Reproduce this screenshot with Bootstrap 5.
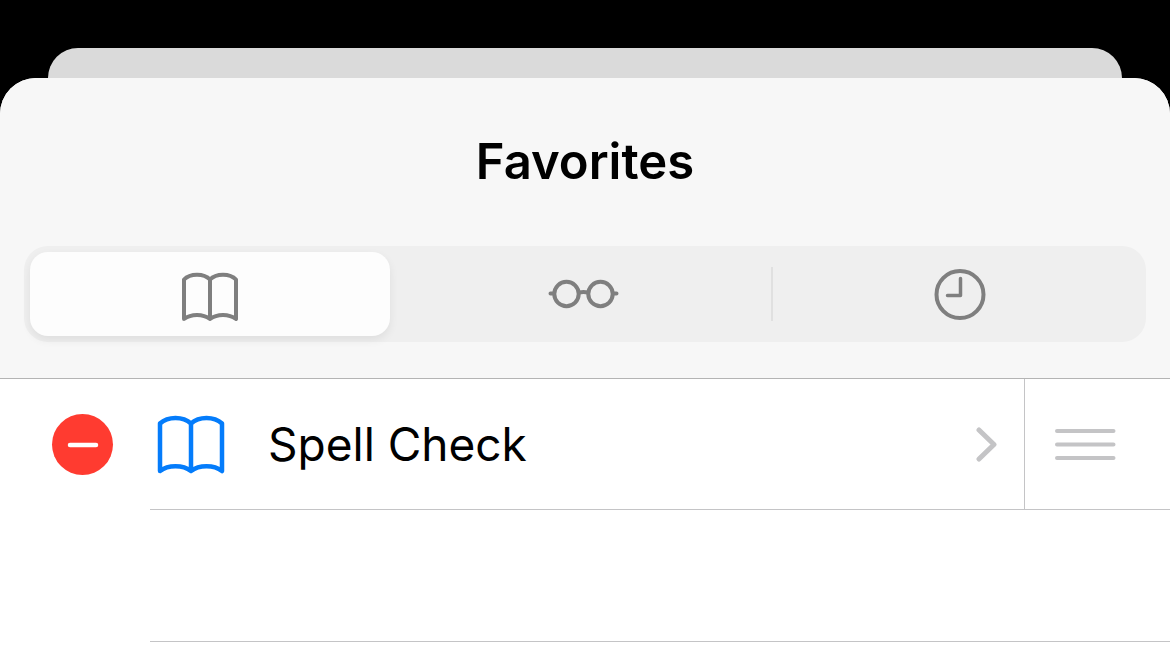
<!DOCTYPE html>
<html lang="en">
<head>
<meta charset="utf-8">
<meta name="viewport" content="width=device-width, initial-scale=1">
<title>Favorites</title>
<link href="https://cdn.jsdelivr.net/npm/bootstrap@5.3.0/dist/css/bootstrap.min.css" rel="stylesheet">
<style>
  body { background: #000; color: #000; font-family: Inter, "Liberation Sans", sans-serif; }
  svg { display: block; fill: none; stroke: currentColor; stroke-linecap: round; stroke-linejoin: round; }
  .sheet-behind { height: 30px; margin: 48px 48px 0; background: #dadada; border-radius: 32px 32px 0 0; }
  .sheet { background: #fff; border-radius: 36px 36px 0 0; }
  .sheet-header { background: #f7f7f7; border-bottom: 1px solid #b4b4b4; padding: 54px 24px 36px; }
  .sheet-title { font-size: 49px; line-height: 60px; font-weight: 600; margin-bottom: 54px; }
  .segments { height: 96px; background: #efefef; border-radius: 24px; color: #7f7f7f; }
  .segment { flex: 1 1 0; margin: 6px 8px 6px 6px; border-radius: 18px; }
  .segment-divider + .segment { margin: 6px 6px 6px 8px; }
  .segment.active { background: #fdfdfd; box-shadow: 0 4px 10px rgba(0, 0, 0, .07); }
  .segment-divider { width: 2px; height: 54px; margin: 0 -1px; background: #e0e0e0; }
  .bookmark-row { height: 131px; }
  .bookmark-row + .bookmark-row { height: 132px; }
  .row-lead { width: 150px; padding-left: 52px; }
  .remove-btn { width: 61px; height: 61px; background: #ff3b30; color: #fff; }
  .row-main { border-bottom: 1px solid #c4c4c6; }
  .bookmark-link { padding: 0 27px 0 7px; gap: 43px; font-size: 46px; line-height: 60px; color: #000; }
  .book-blue { color: #047cfb; }
  .row-grip { width: 146px; border-left: 1px solid #c4c4c6; padding-left: 30px; }
  .soft-gray { color: #c4c4c6; }
</style>
</head>
<body class="min-vh-100 d-flex flex-column overflow-x-hidden">
<div class="sheet-behind"></div>
<main class="sheet flex-grow-1 overflow-hidden">
  <header class="sheet-header">
    <h1 class="sheet-title text-center">Favorites</h1>
    <div class="segments d-flex align-items-center" role="group" aria-label="Lists">
      <button type="button" class="segment active btn border-0 p-0 text-reset align-self-stretch d-flex align-items-center justify-content-center" aria-label="Bookmarks" aria-pressed="true">
        <svg class="mt-1" width="56" height="50" viewBox="0 0 56 50" stroke-width="4"><path d="M28 8.500C22 2 8 2 2 8.500V48C9 42.500 21 42.500 28 48C35 42.500 47 42.500 54 48V8.500C48 2 34 2 28 8.500V48"/></svg>
      </button>
      <button type="button" class="segment btn border-0 p-0 text-reset align-self-stretch d-flex align-items-center justify-content-center" aria-label="Reading List" aria-pressed="false">
        <svg width="72" height="30" viewBox="0 0 72 30" stroke-width="4"><circle cx="18.500" cy="15" r="12.200"/><circle cx="52.500" cy="15" r="12.200"/><path d="M2.500 14.500H6M65 14.500h3.500M31 13.500Q35.500 12.500 40 13.500"/></svg>
      </button>
      <span class="segment-divider"></span>
      <button type="button" class="segment btn border-0 p-0 text-reset align-self-stretch d-flex align-items-center justify-content-center" aria-label="History" aria-pressed="false">
        <svg width="52" height="52" viewBox="0 0 52 52" stroke-width="4"><circle cx="26" cy="26.500" r="23.500"/><path d="M26.500 10.500V27.500H13.500" stroke-width="3.500"/></svg>
      </button>
    </div>
  </header>
  <ul class="list-unstyled m-0">
    <li class="bookmark-row d-flex">
      <div class="row-lead flex-shrink-0 d-flex align-items-center">
        <button type="button" class="remove-btn btn border-0 p-0 rounded-circle d-flex align-items-center justify-content-center" aria-label="Remove Spell Check">
          <svg width="32" height="6" viewBox="0 0 32 6" stroke-width="4.500"><path d="M3 3H29"/></svg>
        </button>
      </div>
      <div class="row-main flex-grow-1 d-flex">
        <a href="#" class="bookmark-link flex-grow-1 d-flex align-items-center text-decoration-none">
          <svg class="book-blue" width="68" height="60" viewBox="0 0 68 60" stroke-width="4.500"><path d="M34 9.500C26 2 11 2 3 9.500V57C11 50.500 26 50.500 34 57C42 50.500 57 50.500 65 57V9.500C57 2 42 2 34 9.500V57"/></svg>
          <span class="flex-grow-1">Spell Check</span>
          <svg class="soft-gray" width="21" height="36" viewBox="0 0 21 36" stroke-width="5"><path d="M3 4L18 18.500L3 33"/></svg>
        </a>
        <button type="button" class="row-grip btn border-top-0 border-end-0 border-bottom-0 rounded-0 pe-0 soft-gray" aria-label="Reorder Spell Check">
          <svg width="62" height="32" viewBox="0 0 62 32" stroke-width="4"><path d="M2 3H58.500M2 16.500H58.500M2 30H58.500"/></svg>
        </button>
      </div>
    </li>
    <li class="bookmark-row d-flex">
      <div class="row-lead flex-shrink-0"></div>
      <div class="row-main flex-grow-1"></div>
    </li>
  </ul>
</main>
<script src="https://cdn.jsdelivr.net/npm/bootstrap@5.3.0/dist/js/bootstrap.bundle.min.js"></script>
</body>
</html>
